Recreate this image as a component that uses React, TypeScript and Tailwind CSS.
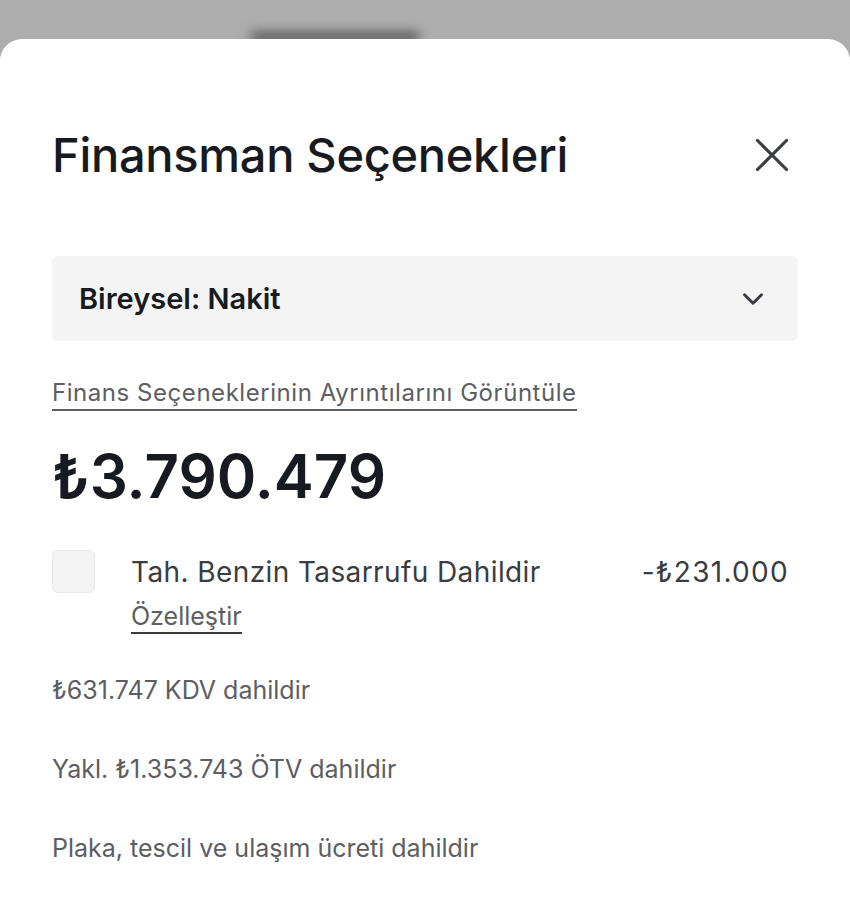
import { X, ChevronDown } from 'lucide-react'

const font = { fontFamily: 'Inter, "Noto Sans", sans-serif' }

export default function App() {
  const notes = [
    '₺631.747 KDV dahildir',
    'Yakl. ₺1.353.743 ÖTV dahildir',
    'Plaka, tescil ve ulaşım ücreti dahildir',
  ]

  return (
    <div className="relative min-h-[913px] w-[850px] overflow-hidden bg-gradient-to-b from-[#aeaeae] to-[#9e9e9e]" style={font}>
      {/* sombra suave */}
      <div className="absolute left-[250px] top-[32px] h-[10px] w-[170px] rounded-full bg-[#505050] blur-[6px]" />

      <div className="relative mt-[39px] min-h-[874px] rounded-t-[22px] bg-white px-[52px] pt-[88px]">
        {/* CABECERA */}
        <div className="flex items-center justify-between">
          <h1 className="text-[47px] font-medium leading-[56px] tracking-[-0.3px] text-[#171a20]">
            Finansman Seçenekleri
          </h1>
          <button className="-my-[2px] mr-[-3px] flex h-[58px] w-[58px] shrink-0 items-center justify-center text-[#393c41]">
            <X size={58} strokeWidth={1.3} className="shrink-0" />
          </button>
        </div>

        {/* SELECT */}
        <div className="mt-[73px] flex h-[85px] items-center justify-between rounded-[6px] bg-[#f4f4f4] pl-[27px] pr-[28px]">
          <span className="text-[29px] font-semibold text-[#171a20]">Bireysel: Nakit</span>
          <ChevronDown size={34} strokeWidth={2.1} className="text-[#393c41]" />
        </div>

        <div className="mt-[36px]">
          <a className="border-b-2 border-[#5c5e62] pb-[2px] text-[24px] leading-[32px] tracking-[0.55px] text-[#5c5e62]">
            Finans Seçeneklerinin Ayrıntılarını Görüntüle
          </a>
        </div>

        <div className="mt-[31px] text-[60px] font-semibold leading-[72px] text-[#171a20]">₺3.790.479</div>

        {/* TASARRUF */}
        <div className="mt-[38px] flex items-start">
          <div className="h-[43px] w-[43px] shrink-0 rounded-[6px] border border-[#e7e7e7] bg-[#f4f4f4]" />
          <div className="ml-[36px] flex flex-1 items-start justify-between">
            <div className="flex flex-col items-start">
              <span className="mt-[3px] text-[28px] leading-[38px] tracking-[0.4px] text-[#393c41]">Tah. Benzin Tasarrufu Dahildir</span>
              <a className="mt-[9px] border-b-2 border-[#393c41] text-[25px] leading-[32px] text-[#5c5e62]">Özelleştir</a>
            </div>
            <span className="mt-[3px] mr-[9px] text-[28px] leading-[38px] tracking-[1.3px] text-[#393c41]">-₺231.000</span>
          </div>
        </div>

        {/* NOTAS */}
        <div className="mt-[40px] flex flex-col gap-[46px]">
          {notes.map((n) => (
            <p key={n} className="text-[25px] leading-[33px] text-[#5c5e62]">{n}</p>
          ))}
        </div>
      </div>
    </div>
  )
}
